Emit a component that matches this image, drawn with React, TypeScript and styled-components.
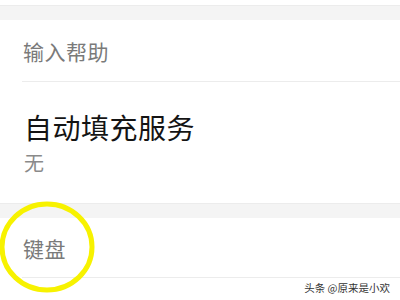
import React from "react";
import styled, { createGlobalStyle } from "styled-components";

const Global = createGlobalStyle`
  html, body { margin: 0; padding: 0; background: #ffffff; }
  body { font-family: "Noto Sans CJK SC", "Noto Sans", sans-serif; }
  #root { width: 400px; height: 300px; overflow: hidden; }
`;

const Page = styled.div`
  position: relative;
  width: 400px;
  height: 300px;
  background: #ffffff;
  display: flex;
  flex-direction: column;
`;

const TopStrip = styled.div`
  height: 5px;
  background: #ffffff;
  flex-shrink: 0;
`;

const GrayBand = styled.div<{ $h: number }>`
  height: ${(p) => p.$h}px;
  background: #f4f4f4;
  border-top: 1px solid #ececec;
  box-sizing: border-box;
  flex-shrink: 0;
`;

const Section = styled.div`
  background: #ffffff;
  display: flex;
  flex-direction: column;
`;

const HeaderRow = styled.div<{ $h: number }>`
  height: ${(p) => p.$h}px;
  display: flex;
  align-items: center;
  padding-left: 23px;
  font-size: 21px;
  color: #7a7a7a;
  letter-spacing: 0.5px;
`;

const Divider = styled.div`
  height: 1px;
  margin-left: 22px;
  background: #ececec;
`;

const Item = styled.div`
  padding: 28px 0 27px 24px;
  display: flex;
  flex-direction: column;
`;

const Title = styled.div`
  font-size: 28px;
  line-height: 34px;
  color: #141414;
  letter-spacing: 0.5px;
`;

const Sub = styled.div`
  margin-top: 6px;
  font-size: 20px;
  line-height: 26px;
  color: #8a8a8a;
`;

const Circle = styled.svg`
  position: absolute;
  left: 0;
  top: 200px;
  width: 100px;
  height: 95px;
`;

const Watermark = styled.div`
  position: absolute;
  right: 10px;
  top: 280px;
  font-size: 10.5px;
  line-height: 15px;
  color: #333333;
  text-shadow: 0 0 2px #ffffff, 0 0 2px #ffffff;
`;

export default function App() {
  return (
    <>
      <Global />
      <Page>
        <TopStrip />
        <GrayBand $h={15} />
        <Section>
          <HeaderRow $h={61}>输入帮助</HeaderRow>
          <Divider />
          <Item>
            <Title>自动填充服务</Title>
            <Sub>无</Sub>
          </Item>
        </Section>
        <GrayBand $h={15} />
        <Section>
          <HeaderRow $h={59}>键盘</HeaderRow>
          <Divider />
        </Section>
        <Circle viewBox="0 0 100 95">
          <ellipse cx="47" cy="47" rx="45" ry="43" fill="none" stroke="#f7f200" strokeWidth="5" />
        </Circle>
        <Watermark>头条 @原来是小欢</Watermark>
      </Page>
    </>
  );
}
